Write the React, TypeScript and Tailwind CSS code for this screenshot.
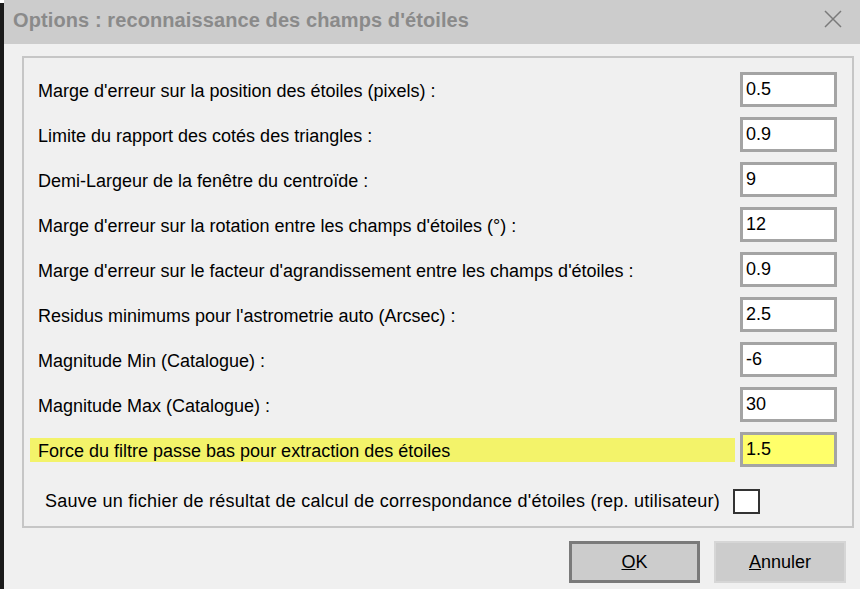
const rows = [
  { label: "Marge d'erreur sur la position des étoiles (pixels) :", value: "0.5" },
  { label: "Limite du rapport des cotés des triangles :", value: "0.9" },
  { label: "Demi-Largeur de la fenêtre du centroïde :", value: "9" },
  { label: "Marge d'erreur sur la rotation entre les champs d'étoiles (°) :", value: "12" },
  { label: "Marge d'erreur sur le facteur d'agrandissement entre les champs d'étoiles :", value: "0.9" },
  { label: "Residus minimums pour l'astrometrie auto (Arcsec) :", value: "2.5" },
  { label: "Magnitude Min (Catalogue) :", value: "-6" },
  { label: "Magnitude Max (Catalogue) :", value: "30" },
  { label: "Force du filtre passe bas pour extraction des étoiles", value: "1.5", hi: true },
];

function Row({ label, value, hi }: { label: string; value: string; hi?: boolean }) {
  return (
    <div className="flex items-center h-[35px]">
      <div className={"flex-1 h-[24px] pl-2 pt-[3px] flex items-center " + (hi ? "bg-[#f3f36a]" : "")}>
        {label}
      </div>
      <div
        className={
          "ml-[5px] w-[97px] h-[35px] border-[3px] border-[#a4a4a4] flex items-center px-[3px] text-[18px] " +
          (hi ? "bg-[#ffff6a]" : "bg-white")
        }
      >
        {value}
      </div>
    </div>
  );
}

export default function App() {
  return (
    <div
      className="flex w-[860px] h-[589px] overflow-hidden text-[18px] text-black"
      style={{ fontFamily: '"Liberation Sans", Arial, sans-serif' }}
    >
      <div className="w-[4px] bg-[#1a1a1a] mt-[3px]" />
      <div className="flex-1 flex flex-col bg-[#f0f0f0]">
        <div className="h-[44px] bg-[#cccccc] flex items-center justify-between pl-[9px] pr-[18px]">
          <span className="text-[20px] font-bold text-[#8a8a8a] -mt-[4px] tracking-[0.1px]">
            Options : reconnaissance des champs d'étoiles
          </span>
          <svg width="18" height="18" viewBox="0 0 18 18" className="-mt-[6px]">
            <path d="M1 1 L17 17 M17 1 L1 17" stroke="#7a7a7a" strokeWidth="1.5" />
          </svg>
        </div>
        <div className="ml-[18px] mr-[6px] mt-[12px] h-[472px] border-2 border-[#c6c6c6] pt-[14px] pl-[6px] pr-[15px] flex flex-col">
          <div className="flex flex-col gap-[10px]">
            {rows.map((r) => (
              <Row key={r.label} {...r} />
            ))}
          </div>
          <div className="flex items-center mt-[21px] pl-[15px]">
            <span className="tracking-[0.25px]">
              Sauve un fichier de résultat de calcul de correspondance d'étoiles (rep. utilisateur)
            </span>
            <div className="ml-[13px] w-[27px] h-[25px] border-2 border-[#333333] bg-white" />
          </div>
        </div>
        <div className="flex justify-end gap-[14px] mt-[13px] mr-[14px]">
          <div className="w-[131px] h-[42px] bg-[#cccccc] border-[3px] border-[#7a7a7a] flex items-center justify-center">
            <span><u>O</u>K</span>
          </div>
          <div className="w-[132px] h-[42px] bg-[#cccccc] border-2 border-[#d6d6d6] flex items-center justify-center">
            <span><u>A</u>nnuler</span>
          </div>
        </div>
      </div>
    </div>
  );
}
